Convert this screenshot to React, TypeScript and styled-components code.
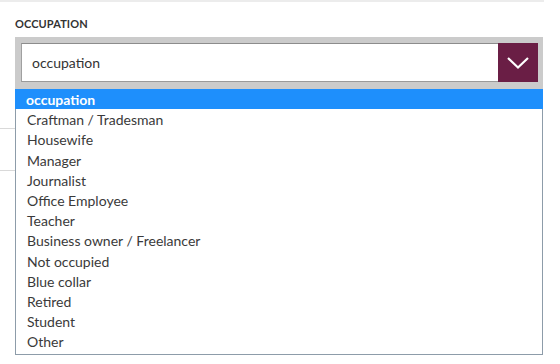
import React from "react";
import styled, { createGlobalStyle } from "styled-components";

const Global = createGlobalStyle`
  html, body { margin: 0; padding: 0; background: #fff; }
  body { font-family: Lato, "Open Sans", sans-serif; }
`;

const Page = styled.div`
  width: 560px;
  height: 364px;
  overflow: hidden;
  position: relative;
`;

const TopStrip = styled.div`
  width: 544px;
  height: 2px;
  background: #ececec;
`;

const Field = styled.div`
  padding-left: 15px;
  width: 528px;
`;

const Label = styled.div`
  margin-top: 15px;
  height: 20px;
  font-size: 11px;
  font-weight: 700;
  color: #333;
  letter-spacing: 0.1px;
  line-height: 14px;
`;

const SelectWrap = styled.div`
  position: relative;
  z-index: 2;
`;

const Frame = styled.div`
  display: flex;
  background: #cbcbcb;
  padding: 6px 5px 7px 6px;
`;

const Input = styled.div`
  flex: 1;
  height: 39px;
  box-sizing: border-box;
  background: #fff;
  border-top: 1px solid #8c8c8c;
  border-left: 1px solid #a0a0a0;
  border-bottom: 1px solid #9a9a9a;
  display: flex;
  align-items: center;
  padding-left: 10px;
  font-size: 14px;
  color: #333;
`;

const Toggle = styled.div`
  width: 40px;
  height: 39px;
  background: #6a1e45;
  display: flex;
  align-items: center;
  justify-content: center;
`;

const List = styled.ul`
  position: absolute;
  top: 100%;
  left: 0;
  right: 0;
  margin: 0;
  padding: 0 0 3px 0;
  list-style: none;
  background: #fff;
  border: 1px solid #8d9ca9;
  border-top: none;
`;

const Item = styled.li<{ $active?: boolean }>`
  height: 20.2px;
  line-height: 21px;
  padding-left: 11px;
  font-size: 14px;
  color: ${(p) => (p.$active ? "#fff" : "#3a3a3a")};
  background: ${(p) => (p.$active ? "#1e8ffc" : "transparent")};
  font-weight: ${(p) => (p.$active ? 700 : 400)};
  margin: ${(p) => (p.$active ? "0 -1px" : "0")};
`;

const BehindField = styled.div`
  margin-top: 39px;
  width: 543px;
  height: 41px;
  border-top: 1px solid #d9d9d9;
  border-bottom: 1px solid #d9d9d9;
`;

const options = [
  "occupation",
  "Craftman / Tradesman",
  "Housewife",
  "Manager",
  "Journalist",
  "Office Employee",
  "Teacher",
  "Business owner / Freelancer",
  "Not occupied",
  "Blue collar",
  "Retired",
  "Student",
  "Other",
];

export default function App() {
  return (
    <Page>
      <Global />
      <TopStrip />
      <Field>
        <Label>OCCUPATION</Label>
        <SelectWrap>
          <Frame>
            <Input>occupation</Input>
            <Toggle>
              <svg width="24" height="14" viewBox="0 0 24 14">
                <path d="M2 2 L12 11.5 L22 2" fill="none" stroke="#fff" strokeWidth="2.2" />
              </svg>
            </Toggle>
          </Frame>
          <List>
            {options.map((o, i) => (
              <Item key={o} $active={i === 0}>
                {o}
              </Item>
            ))}
          </List>
        </SelectWrap>
      </Field>
      <BehindField />
    </Page>
  );
}
